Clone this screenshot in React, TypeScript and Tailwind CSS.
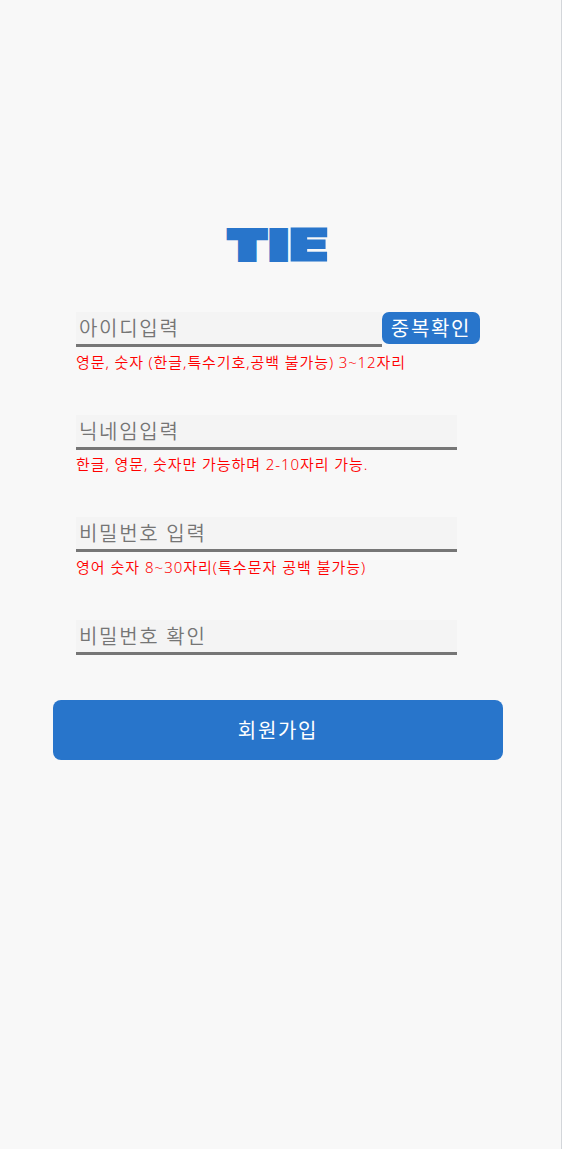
import type { InputHTMLAttributes, ReactNode } from "react";

function Field({ className = "", ...rest }: InputHTMLAttributes<HTMLInputElement>) {
  return (
    <input
      {...rest}
      className={`block h-[35px] rounded-none border-0 border-b-[3px] border-[#767676] bg-[#f4f4f4] px-[3px] pt-px text-[20px] leading-[30px] font-[350] tracking-[1.7px] text-[#333] outline-none placeholder:text-[#757575] ${className}`}
    />
  );
}

function Hint({ children, className = "" }: { children: ReactNode; className?: string }) {
  return (
    <p className={`h-[22px] whitespace-nowrap text-[15px] leading-[22px] font-[350] text-[#ff0000] ${className}`}>
      {children}
    </p>
  );
}

function Logo() {
  return (
    <h1
      aria-label="TIE"
      className="mt-[228px] ml-[227px] flex h-[34px] font-['Inter'] text-[38.5px] leading-[34px] font-black text-[#2875cb] [-webkit-text-stroke:6px_#2875cb]"
    >
      <span className="flex w-[41px] justify-center">
        <span className="block scale-x-[1.36]">T</span>
      </span>
      <span className="ml-px flex w-[19px] justify-center">
        <span className="block scale-x-[1.36]">I</span>
      </span>
      <span className="ml-[2px] flex w-[38px] justify-center text-[42px] leading-[34px] [-webkit-text-stroke:3px_#2875cb]">
        <span className="block translate-y-[0.4px] scale-x-[1.46] [text-shadow:0.8px_0_#2875cb,-0.8px_0_#2875cb]">
          E
        </span>
      </span>
    </h1>
  );
}

export default function App() {
  return (
    <main className="flex h-[1149px] w-[562px] flex-col overflow-hidden border-r border-[#d3d6da] bg-[#f8f8f8] font-['Noto_Sans','Noto_Sans_CJK_KR',sans-serif]">
      <Logo />
      <form className="mt-[50px] flex flex-col" onSubmit={(e) => e.preventDefault()}>
        <div className="ml-[76px] h-[103px]">
          <div className="flex items-start">
            <Field placeholder="아이디입력" className="w-[306px]" />
            <button
              type="button"
              className="h-8 w-[98px] rounded-[7px] bg-[#2875cb] pt-px text-[20px] leading-[31px] font-normal tracking-[1.7px] whitespace-nowrap text-white"
            >
              중복확인
            </button>
          </div>
          <Hint className="mt-[4px] tracking-[0.93px] [word-spacing:-0.2px]">
            영문, 숫자 (한글,특수기호,공백 불가능) 3~12자리
          </Hint>
        </div>
        <div className="ml-[76px] h-[102px]">
          <Field placeholder="닉네임입력" className="w-[381px]" />
          <Hint className="mt-[3px] tracking-[0.98px] [word-spacing:-0.3px]">
            한글, 영문, 숫자만 가능하며 2-10자리 가능.
          </Hint>
        </div>
        <div className="ml-[76px] h-[103px]">
          <Field type="password" placeholder="비밀번호 입력" className="w-[381px]" />
          <Hint className="mt-[4px] tracking-[1px]">영어 숫자 8~30자리(특수문자 공백 불가능)</Hint>
        </div>
        <Field type="password" placeholder="비밀번호 확인" className="ml-[76px] w-[381px]" />
        <button
          type="submit"
          className="mt-[45px] ml-[53px] h-[60px] w-[450px] rounded-[8px] bg-[#2875cb] pt-px text-[20px] font-normal tracking-[1.7px] text-white"
        >
          회원가입
        </button>
      </form>
    </main>
  );
}
